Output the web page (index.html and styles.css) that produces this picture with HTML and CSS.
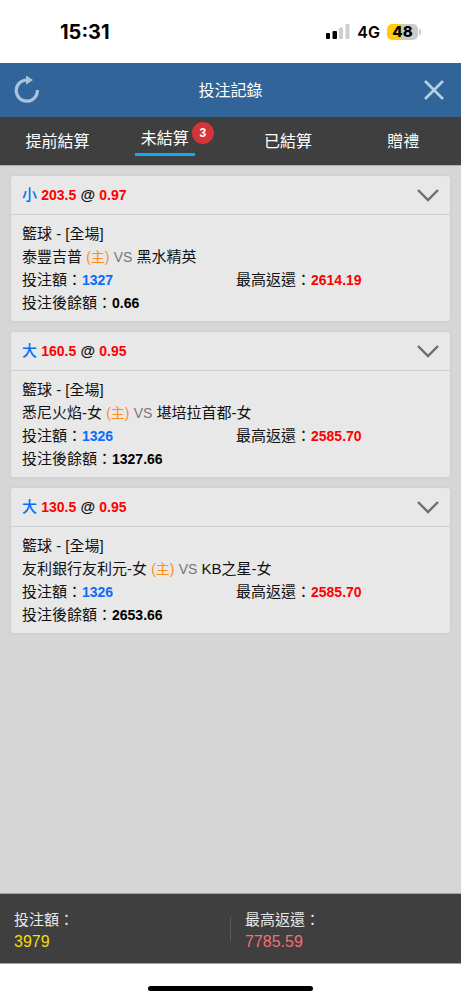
FILE: index.html
```
<!DOCTYPE html>
<html lang="zh-Hant">

<head>
  <meta charset="UTF-8">
  <meta name="viewport" content="width=device-width, initial-scale=1.0">
  <title>投注記錄</title>
  <link rel="stylesheet" href="styles.css">
</head>

<body>
  <div class="status-bar">
    <span class="time">15:31</span>
    <div class="status-right">
      <svg class="signal" width="24" height="15" viewBox="0 0 24 15">
        <rect x="0" y="9" width="4" height="6" rx="1" fill="#000" />
        <rect x="6.5" y="7" width="4.5" height="8" rx="1" fill="#000" />
        <rect x="13" y="3.5" width="4" height="11.5" rx="1" fill="#cfcfcf" />
        <rect x="19.5" y="0" width="4" height="15" rx="1" fill="#cfcfcf" />
      </svg>
      <span class="network">4G</span>
      <span class="battery">48</span>
    </div>
  </div>

  <header class="header">
    <button class="icon-btn" aria-label="重新整理">
      <svg width="26" height="30" viewBox="0 -1 26 30">
        <path d="M23.4 14 A10.6 10.6 0 1 1 12.8 4 H14" fill="none" stroke="#a9c3dd" stroke-width="3.2" />
        <path d="M12 -0.6 L19 4 L12 8.8 Z" fill="#a9c3dd" />
      </svg>
    </button>
    <h1>投注記錄</h1>
    <button class="icon-btn" aria-label="關閉">
      <svg width="20" height="20" viewBox="0 0 20 20">
        <path d="M1 1 L19 19 M19 1 L1 19" fill="none" stroke="#b9cfe4" stroke-width="2.6" />
      </svg>
    </button>
  </header>

  <nav class="tabs">
    <button class="tab">提前結算</button>
    <button class="tab active"><span class="tab-label">未結算<span class="badge">3</span></span></button>
    <button class="tab">已結算</button>
    <button class="tab">贈禮</button>
  </nav>

  <main class="bets">
    <section class="card">
      <div class="card-head">
        <h2><span class="pick">小</span> <span class="red">203.5</span> @ <span class="red">0.97</span></h2>
        <button class="toggle" aria-label="收合">
          <svg width="22" height="13" viewBox="0 0 22 13">
            <path d="M1 1 L11 11 L21 1" fill="none" stroke="#6c6c6c" stroke-width="2.4" />
          </svg>
        </button>
      </div>
      <div class="card-body">
        <p>籃球 - [全場]</p>
        <p>泰豐吉普 <span class="home">(主)</span> <span class="vs">VS</span> 黑水精英</p>
        <div class="amounts">
          <p>投注額：<b class="blue">1327</b></p>
          <p>最高返還：<b class="red">2614.19</b></p>
        </div>
        <p>投注後餘額：<b>0.66</b></p>
      </div>
    </section>

    <section class="card">
      <div class="card-head">
        <h2><span class="pick">大</span> <span class="red">160.5</span> @ <span class="red">0.95</span></h2>
        <button class="toggle" aria-label="收合">
          <svg width="22" height="13" viewBox="0 0 22 13">
            <path d="M1 1 L11 11 L21 1" fill="none" stroke="#6c6c6c" stroke-width="2.4" />
          </svg>
        </button>
      </div>
      <div class="card-body">
        <p>籃球 - [全場]</p>
        <p>悉尼火焰-女 <span class="home">(主)</span> <span class="vs">VS</span> 堪培拉首都-女</p>
        <div class="amounts">
          <p>投注額：<b class="blue">1326</b></p>
          <p>最高返還：<b class="red">2585.70</b></p>
        </div>
        <p>投注後餘額：<b>1327.66</b></p>
      </div>
    </section>

    <section class="card">
      <div class="card-head">
        <h2><span class="pick">大</span> <span class="red">130.5</span> @ <span class="red">0.95</span></h2>
        <button class="toggle" aria-label="收合">
          <svg width="22" height="13" viewBox="0 0 22 13">
            <path d="M1 1 L11 11 L21 1" fill="none" stroke="#6c6c6c" stroke-width="2.4" />
          </svg>
        </button>
      </div>
      <div class="card-body">
        <p>籃球 - [全場]</p>
        <p>友利銀行友利元-女 <span class="home">(主)</span> <span class="vs">VS</span> KB之星-女</p>
        <div class="amounts">
          <p>投注額：<b class="blue">1326</b></p>
          <p>最高返還：<b class="red">2585.70</b></p>
        </div>
        <p>投注後餘額：<b>2653.66</b></p>
      </div>
    </section>
  </main>

  <footer class="totals">
    <div class="total">
      <p>投注額：</p>
      <p class="total-value yellow">3979</p>
    </div>
    <div class="divider"></div>
    <div class="total">
      <p>最高返還：</p>
      <p class="total-value pink">7785.59</p>
    </div>
  </footer>

  <div class="home-bar"><span></span></div>
</body>

</html>
```

FILE: styles.css
```
* {
  box-sizing: border-box;
}

body {
  display: flex;
  flex-direction: column;
  min-height: 100vh;
  margin: 0;
  font-family: "Liberation Sans", "Noto Sans CJK TC", sans-serif;
  font-size: 15px;
  color: #111;
  background-color: #fff;
}

h1,
h2,
p {
  margin: 0;
}

button {
  padding: 0;
  border: none;
  background: none;
  color: inherit;
  font: inherit;
  cursor: pointer;
}

svg {
  display: block;
}

/* phone status bar */
.status-bar {
  display: flex;
  justify-content: space-between;
  align-items: center;
  height: 63px;
  padding: 0 43px 0 60px;
  font-family: Inter, sans-serif;
  color: #000;
}

.time {
  font-size: 20px;
  font-weight: 700;
}

.status-right {
  display: flex;
  align-items: center;
  gap: 7px;
}

.network {
  font-size: 16px;
  font-weight: 600;
}

.battery {
  position: relative;
  width: 31px;
  border-radius: 5px;
  background: linear-gradient(90deg, #ffcc0a 50%, #cbcbcb 50%);
  font-size: 15px;
  font-weight: 800;
  line-height: 16px;
  text-align: center;
}

.battery::after {
  content: "";
  position: absolute;
  top: 5px;
  right: -3px;
  width: 2px;
  height: 6px;
  border-radius: 0 2px 2px 0;
  background-color: #cbcbcb;
}

/* header */
.header {
  display: flex;
  justify-content: space-between;
  align-items: center;
  height: 54px;
  padding: 0 14px;
  background-color: #316599;
  color: #fff;
}

.header h1 {
  padding-bottom: 2px;
  font-size: 16px;
  font-weight: 400;
}

.icon-btn {
  display: flex;
  justify-content: center;
  width: 26px;
}

/* tabs */
.tabs {
  display: grid;
  grid-template-columns: repeat(4, 1fr);
  height: 49px;
  border-bottom: 1px solid #b0b0b0;
  background-color: #3f3f3f;
  color: #fff;
  font-size: 16px;
}

.tab {
  padding-bottom: 2px;
}

.tab-label {
  position: relative;
  display: inline-block;
  margin-right: 16px;
  padding: 0 6px;
  border-bottom: 3px solid #0eaaf8;
  line-height: 28px;
}

.badge {
  position: absolute;
  top: -3px;
  right: -19px;
  width: 22px;
  height: 22px;
  border-radius: 50%;
  background-color: #d43538;
  font-size: 12px;
  font-weight: 700;
  line-height: 22px;
}

/* bet list */
.bets {
  flex: 1;
  display: flex;
  flex-direction: column;
  gap: 11px;
  padding: 10px 11px;
  background-color: #d6d6d6;
}

.card {
  border-radius: 3px;
  background-color: #e8e8e8;
  box-shadow: 0 0 2px 1px #cfcfcf;
}

.card-head {
  display: flex;
  justify-content: space-between;
  align-items: center;
  height: 39px;
  padding: 0 11px;
  border-bottom: 1px solid #cfcfcf;
}

.card-head h2 {
  padding-bottom: 3px;
  font-size: 15px;
  font-weight: 700;
}

.card-head .pick {
  color: #0a6cff;
  font-weight: 500;
}

.card-head .red {
  font-size: 14px;
}

.card-body {
  padding: 7px 0 7px 11px;
  line-height: 23px;
}

.card-body b,
.card-body span {
  font-size: 14px;
  line-height: 1;
}

.card-body b {
  color: #000;
}

.amounts {
  display: grid;
  grid-template-columns: 1fr 1fr;
}

.card-body .home {
  color: #ff8c1a;
}

.card-body .vs {
  color: #777;
}

.red,
.card-body .red {
  color: #f00;
}

.card-body .blue {
  color: #0a6cff;
}

/* totals */
.totals {
  display: flex;
  align-items: center;
  height: 71px;
  border-top: 1px solid #a0a0a0;
  border-bottom: 1px solid #a0a0a0;
  background-color: #3f3f3f;
  color: #e8e8e8;
  line-height: 22px;
}

.total {
  flex: 1;
  padding: 5px 14px 0;
}

.divider {
  width: 1px;
  height: 24px;
  background-color: #5c5c5c;
}

.total-value {
  font-size: 16px;
}

.yellow {
  color: #f5d914;
}

.pink {
  color: #f76e75;
}

.home-bar {
  display: flex;
  justify-content: center;
  height: 36px;
  padding-top: 22px;
}

.home-bar span {
  width: 165px;
  height: 5px;
  border-radius: 3px;
  background-color: #000;
}
```
